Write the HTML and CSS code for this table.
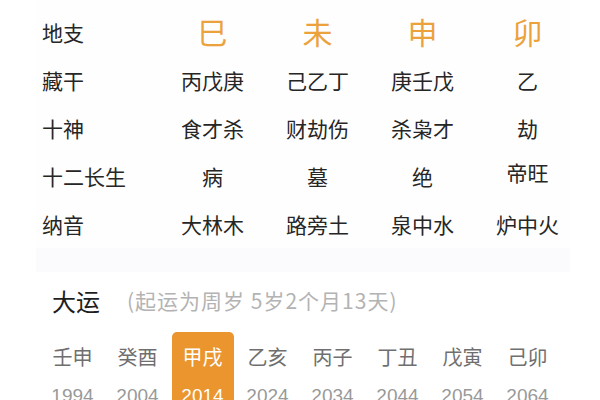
FILE: index.html
```html
<!DOCTYPE html>
<html lang="zh">
<head>
<meta charset="utf-8">
<link rel="stylesheet" href="styles.css">
</head>
<body>
<div class="page">
  <section class="card">
    <div class="grid">
      <div class="lbl">地支</div>
      <div class="cell zhi">巳</div><div class="cell zhi">未</div><div class="cell zhi">申</div><div class="cell zhi">卯</div>
      <div class="lbl">藏干</div>
      <div class="cell">丙戊庚</div><div class="cell">己乙丁</div><div class="cell">庚壬戊</div><div class="cell">乙</div>
      <div class="lbl">十神</div>
      <div class="cell">食才杀</div><div class="cell">财劫伤</div><div class="cell">杀枭才</div><div class="cell">劫</div>
      <div class="lbl">十二长生</div>
      <div class="cell">病</div><div class="cell">墓</div><div class="cell">绝</div><div class="cell up">帝旺</div>
      <div class="lbl">纳音</div>
      <div class="cell">大林木</div><div class="cell">路旁土</div><div class="cell">泉中水</div><div class="cell">炉中火</div>
    </div>
    <div class="band"></div>
  </section>
  <section class="dayun">
    <div class="head"><span class="title">大运</span><span class="sub">(起运为周岁 5岁2个月13天)</span></div>
    <div class="list">
      <div class="item"><div class="name">壬申</div><div class="year">1994</div></div>
      <div class="item"><div class="name">癸酉</div><div class="year">2004</div></div>
      <div class="item active"><div class="name">甲戌</div><div class="year">2014</div></div>
      <div class="item"><div class="name">乙亥</div><div class="year">2024</div></div>
      <div class="item"><div class="name">丙子</div><div class="year">2034</div></div>
      <div class="item"><div class="name">丁丑</div><div class="year">2044</div></div>
      <div class="item"><div class="name">戊寅</div><div class="year">2054</div></div>
      <div class="item"><div class="name">己卯</div><div class="year">2064</div></div>
    </div>
  </section>
</div>
</body>
</html>
```
FILE: styles.css
```css
html, body {
  margin: 0;
  padding: 0;
  background: #ffffff;
  font-family: "Noto Sans CJK SC", "Noto Sans", sans-serif;
  overflow: hidden;
}
.page {
  width: 600px;
  height: 400px;
  overflow: hidden;
}
.card {
  margin: 0 30px 0 36px;
  background: #fefefe;
}
.grid {
  padding: 8px 0 0 6px;
  display: grid;
  grid-template-columns: 118px repeat(4, 105px);
  grid-auto-rows: 48px;
  align-items: center;
}
.lbl {
  font-size: 21px;
  color: #262626;
  line-height: 1;
}
.cell {
  font-size: 21px;
  color: #262626;
  text-align: center;
  line-height: 1;
}
.cell.up { margin-top: -8px; }
.zhi {
  font-size: 30px;
  color: #eba23c;
  margin-top: -2px;
}
.band {
  height: 24px;
  background: #fbfafc;
}
.dayun {
  padding: 0 0 0 40px;
}
.head {
  padding: 8px 0 0 12px;
  height: 48px;
  display: flex;
  align-items: center;
  box-sizing: border-box;
}
.title {
  font-size: 24px;
  color: #1e1e1e;
  margin-right: 27px;
}
.sub {
  font-size: 21px;
  letter-spacing: 1px;
  color: #b3b3b3;
}
.list {
  display: flex;
  margin-top: 12px;
}
.item {
  width: 65px;
  display: flex;
  flex-direction: column;
  align-items: center;
}
.name {
  width: 62px;
  padding-top: 11px;
  text-align: center;
  font-size: 20px;
  line-height: 28px;
  color: #6f6f6f;
}
.year {
  width: 62px;
  padding-top: 12px;
  text-align: center;
  font-size: 19px;
  line-height: 26px;
  color: #999;
  font-family: "Liberation Sans", sans-serif;
}
.item.active .name,
.item.active .year {
  background: #ea952d;
  color: #fff;
}
.item.active .name {
  border-radius: 5px 5px 0 0;
}
```
